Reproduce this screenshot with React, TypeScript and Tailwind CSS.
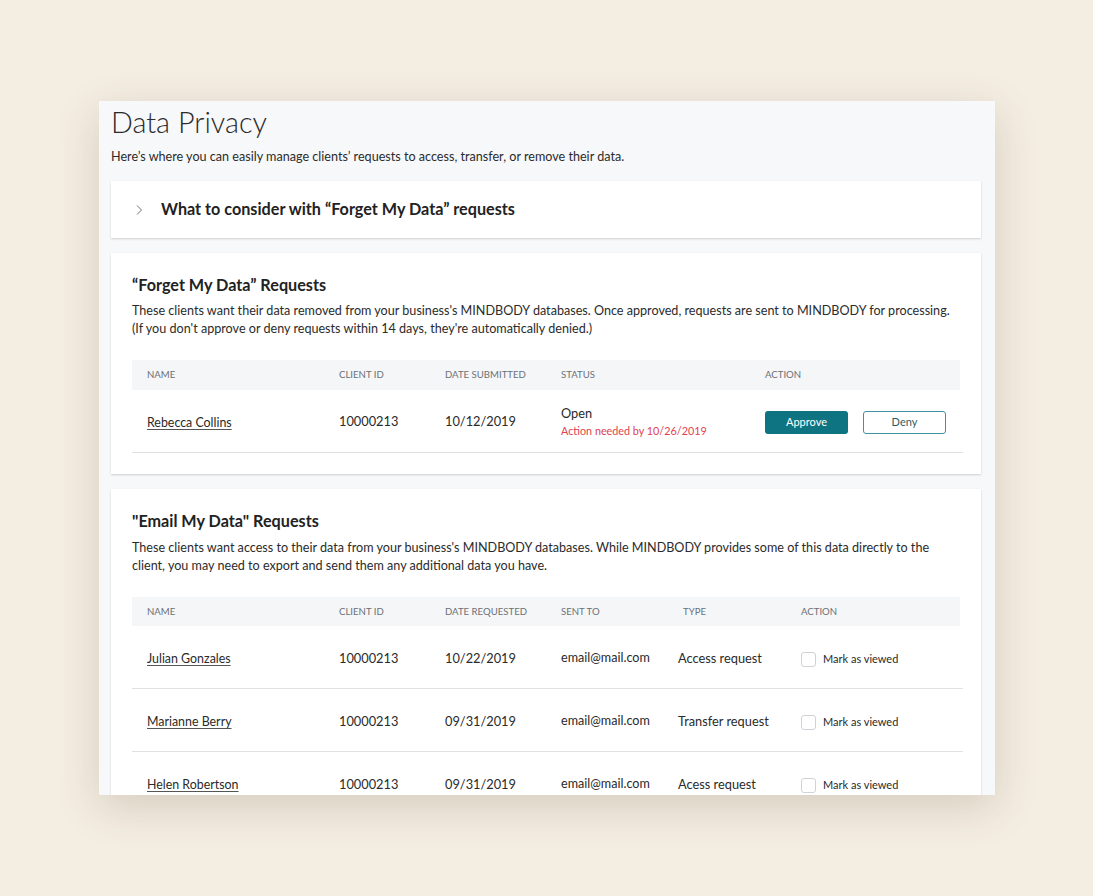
import React from 'react';

const forgetRows = [
  { name: 'Rebecca Collins', id: '10000213', date: '10/12/2019', due: '10/26/2019' },
];

const emailRows = [
  { name: 'Julian Gonzales', id: '10000213', date: '10/22/2019', to: 'email@mail.com', type: 'Access request' },
  { name: 'Marianne Berry', id: '10000213', date: '09/31/2019', to: 'email@mail.com', type: 'Transfer request' },
  { name: 'Helen Robertson', id: '10000213', date: '09/31/2019', to: 'email@mail.com', type: 'Acess request' },
];

const forgetCols = 'grid grid-cols-[207px_106px_116px_204px_1fr] items-center';
const emailCols = 'grid grid-cols-[207px_106px_116px_117px_123px_1fr] items-center';

function HeadCell({ children, className = '' }: { children: React.ReactNode; className?: string }) {
  return <div className={`text-[9.6px] uppercase text-[#6c7076] ${className}`}>{children}</div>;
}

function NameLink({ children }: { children: React.ReactNode }) {
  return (
    <div className="pl-[15px] text-[12.4px] leading-[19px]">
      <a href="#" className="text-[#2a2a2a] underline underline-offset-2 decoration-[#555]">
        {children}
      </a>
    </div>
  );
}

function Card({ children, className = '' }: { children: React.ReactNode; className?: string }) {
  return <div className={`bg-white shadow-[0_1px_2px_rgba(0,0,0,0.16)] ${className}`}>{children}</div>;
}

export default function App() {
  return (
    <div
      className="h-screen w-screen overflow-hidden bg-[#f4ede2] pt-[101px] pl-[99px]"
      style={{ fontFamily: 'Lato, "Open Sans", sans-serif' }}
    >
      <div className="w-[896px] h-[694px] overflow-hidden bg-[#f7f8fa] shadow-[0_12px_40px_rgba(80,60,30,0.18)] pl-[12px] pr-[14px] pt-[3px]">
        <h1 className="text-[28.8px] leading-[36px] font-light text-[#2b2b2b] m-0">Data Privacy</h1>
        <p className="mt-[8px] text-[12.6px] leading-[18px] text-[#2b2b2b]">
          Here’s where you can easily manage clients’ requests to access, transfer, or remove their data.
        </p>

        {/* accordion */}
        <Card className="mt-[15px] h-[57px] flex items-center pl-[24px]">
          <svg width="8" height="12" viewBox="0 0 8 12" fill="none" stroke="#6f7378" strokeWidth="1">
            <polyline points="2,1.5 6.5,6 2,10.5" />
          </svg>
          <span className="ml-[18px] text-[16.2px] font-bold text-[#222]">
            What to consider with “Forget My Data” requests
          </span>
        </Card>

        {/* forget */}
        <Card className="mt-[15px] pl-[21px] pr-[18px] pt-[22px] pb-[21px]">
          <h2 className="text-[16.2px] leading-[20px] font-bold text-[#222]">“Forget My Data” Requests</h2>
          <p className="mt-[7px] text-[12.6px] leading-[18px] text-[#2b2b2b]">
            These clients want their data removed from your business's MINDBODY databases. Once approved, requests are
            sent to MINDBODY for processing. (If you don't approve or deny requests within 14 days, they're
            automatically denied.)
          </p>
          <div className="mt-[22px]">
            <div className={`${forgetCols} h-[30px] pt-[1px] bg-[#f5f6f8] mr-[3px]`}>
              <HeadCell className="pl-[15px]">Name</HeadCell>
              <HeadCell>Client ID</HeadCell>
              <HeadCell>Date Submitted</HeadCell>
              <HeadCell>Status</HeadCell>
              <HeadCell>Action</HeadCell>
            </div>
            {forgetRows.map((r) => (
              <div key={r.name} className={`${forgetCols} h-[63px] pt-[2px] border-b border-[#dfe1e4]`}>
                <NameLink>{r.name}</NameLink>
                <div className="text-[12.8px] text-[#2a2a2a]">{r.id}</div>
                <div className="text-[12.8px] text-[#2a2a2a]">{r.date}</div>
                <div className="leading-[18px]">
                  <div className="text-[12.8px] text-[#2a2a2a]">Open</div>
                  <div className="text-[10.8px] text-[#e0424f]">Action needed by {r.due}</div>
                </div>
                <div className="flex items-center gap-[15px]">
                  <button className="w-[83px] h-[23px] rounded-[3px] bg-[#0e7482] text-white text-[11px]">
                    Approve
                  </button>
                  <button className="w-[83px] h-[23px] rounded-[3px] border border-[#3f939c] bg-white text-[#1f5f68] text-[11px]">
                    Deny
                  </button>
                </div>
              </div>
            ))}
          </div>
        </Card>

        {/* email */}
        <Card className="mt-[15px] pl-[21px] pr-[18px] pt-[22px] pb-[21px]">
          <h2 className="text-[16.2px] leading-[20px] font-bold text-[#222]">"Email My Data" Requests</h2>
          <p className="mt-[8px] text-[12.6px] leading-[18px] text-[#2b2b2b]">
            These clients want access to their data from your business's MINDBODY databases. While MINDBODY provides
            some of this data directly to the client, you may need to export and send them any additional data you
            have.
          </p>
          <div className="mt-[22px]">
            <div className={`${emailCols} h-[29px] pt-[2px] bg-[#f5f6f8] mr-[3px]`}>
              <HeadCell className="pl-[15px]">Name</HeadCell>
              <HeadCell>Client ID</HeadCell>
              <HeadCell>Date Requested</HeadCell>
              <HeadCell>Sent To</HeadCell>
              <HeadCell className="pl-[5px]">Type</HeadCell>
              <HeadCell>Action</HeadCell>
            </div>
            {emailRows.map((r) => (
              <div key={r.name} className={`${emailCols} h-[63px] pt-[3px] border-b border-[#dfe1e4]`}>
                <NameLink>{r.name}</NameLink>
                <div className="text-[12.8px] text-[#2a2a2a]">{r.id}</div>
                <div className="text-[12.8px] text-[#2a2a2a]">{r.date}</div>
                <div className="text-[12.6px] text-[#2a2a2a]">{r.to}</div>
                <div className="text-[12.8px] text-[#2a2a2a]">{r.type}</div>
                <label className="flex items-center gap-[7px] pt-[1px]">
                  <span className="w-[15px] h-[15px] rounded-[3px] border border-[#cfd3d8] bg-white" />
                  <span className="text-[11px] text-[#2a2a2a]">Mark as viewed</span>
                </label>
              </div>
            ))}
          </div>
        </Card>
      </div>
    </div>
  );
}
